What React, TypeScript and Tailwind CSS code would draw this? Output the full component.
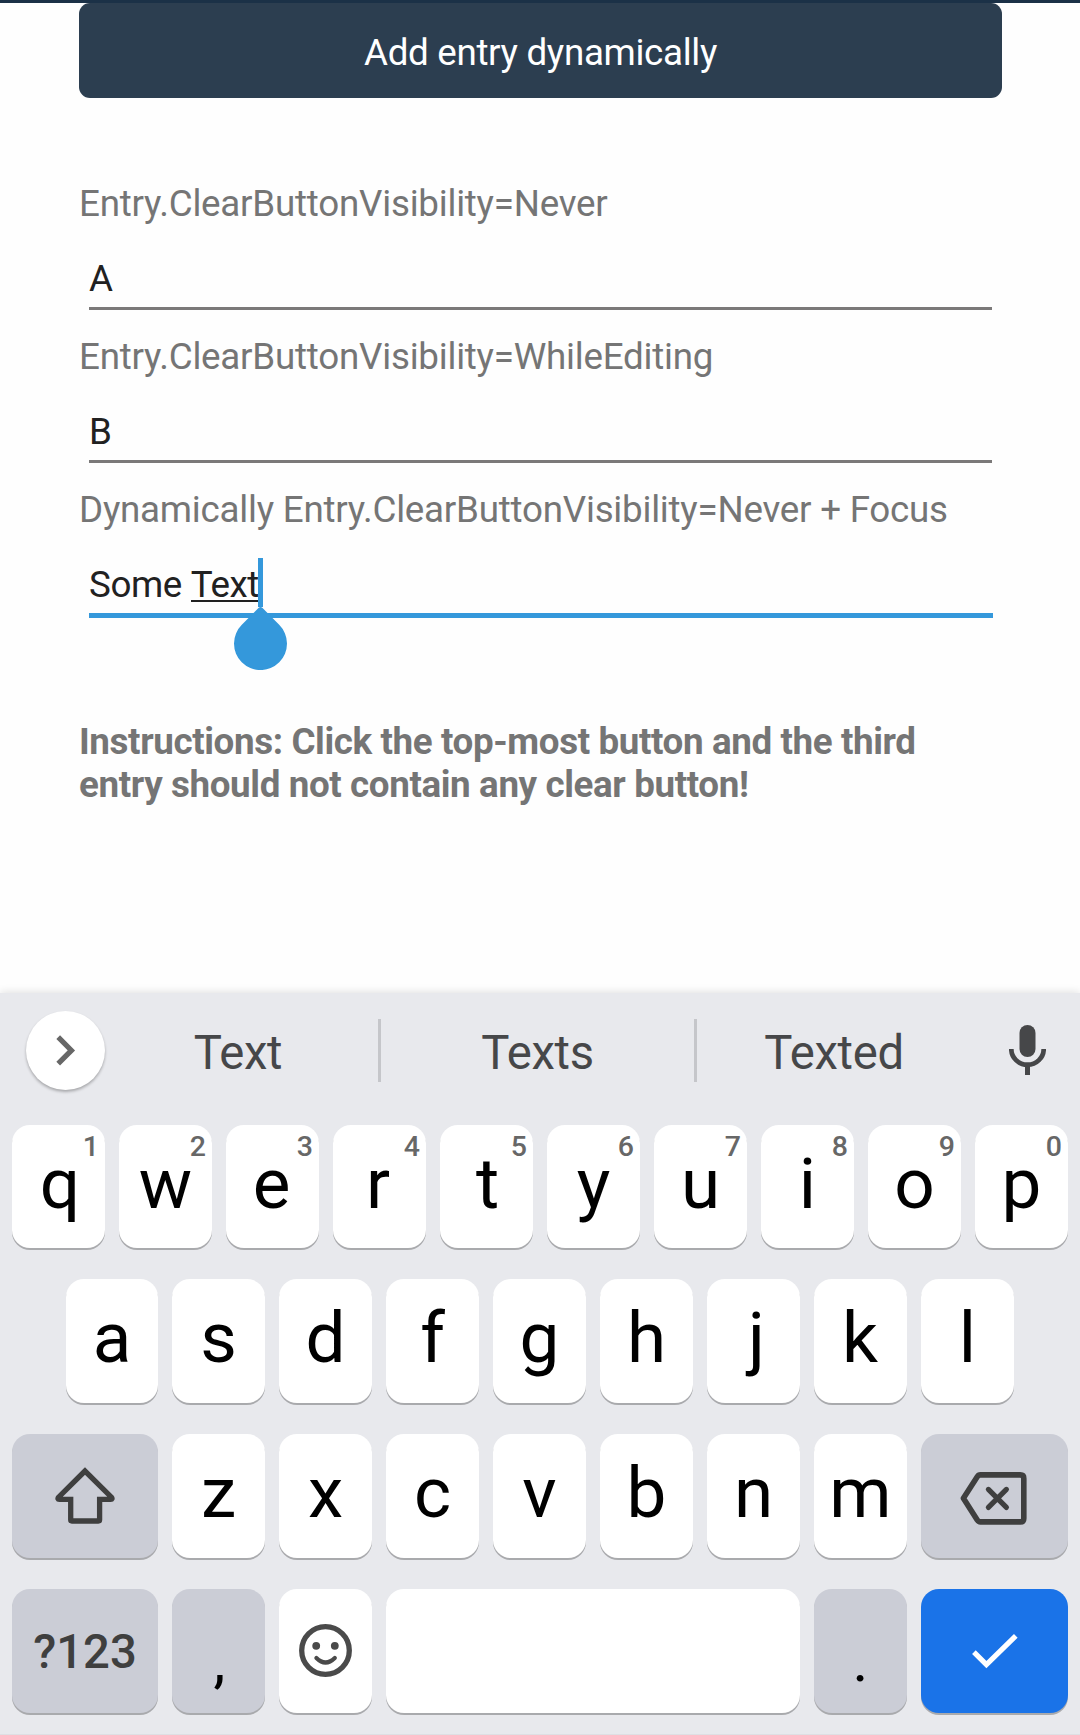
import type { ReactNode } from "react";

function Entry({ label, children, focused }: { label: string; children: ReactNode; focused?: boolean }) {
  return (
    <div className="h-[153px]">
      <div className="text-[#757575] tracking-[-0.235px] whitespace-nowrap">{label}</div>
      <div className="mt-8 mx-[10px]">
        <div className="h-[50px] text-[#212121] tracking-[-0.4px] whitespace-nowrap">{children}</div>
        {focused ? (
          <div className="h-[5px] -mr-px bg-[#3498db]" />
        ) : (
          <div className="h-[3px] bg-[#7b7979]" />
        )}
      </div>
    </div>
  );
}

function Key({
  children,
  hint,
  className = "w-[93px] h-[124px] bg-white",
}: {
  children?: ReactNode;
  hint?: string;
  className?: string;
}) {
  return (
    <div
      className={
        "relative shrink-0 rounded-[18px] flex justify-center shadow-[0_2px_0_#a9aaad] " + className
      }
    >
      {hint && (
        <span className="absolute right-[6px] top-0 text-[28.5px] leading-[43px] font-medium text-[#676767]">
          {hint}
        </span>
      )}
      {children}
    </div>
  );
}

const nudges: Record<string, string> = {
  q: "pl-[3px]",
  e: "pr-[2px]",
  r: "pr-[3px]",
  t: "pl-[2px]",
  j: "pl-[6px]",
  k: "pr-[1px]",
};

function Letter({ char, hint, className }: { char: string; hint?: string; className?: string }) {
  return (
    <Key hint={hint} className={className}>
      <span className={"text-[71px] leading-[118px] text-black " + (nudges[char] ?? "")}>{char}</span>
    </Key>
  );
}

function ShiftIcon() {
  return (
    <svg className="self-center -mt-[2px]" width="60" height="57" viewBox="0 0 60 57" fill="none" stroke="#3f3f3f" strokeWidth="5.3">
      <path d="M30 4 L3.6 30.2 Q2 32.3 4.4 32.4 H15.7 V52.8 Q15.7 54 16.9 54 H43.4 Q44.6 54 44.6 52.8 V32.4 H55.6 Q58 32.3 56.4 30.2 Z" />
    </svg>
  );
}

function BackspaceIcon() {
  return (
    <svg className="self-center mt-[4px] mr-[3px]" width="67" height="53" viewBox="0 0 67 53" fill="none" stroke="#3f3f3f">
      <path
        strokeWidth="5.6"
        strokeLinejoin="round"
        d="M3.4 26.3 L17.4 4.6 Q18.4 2.9 20.4 2.9 H60.3 Q63.8 2.9 63.8 6.4 V46.4 Q63.8 49.9 60.3 49.9 H20.4 Q18.4 49.9 17.4 48.2 Z"
      />
      <path strokeWidth="5.2" strokeLinecap="round" d="M28.4 17.4 L46.4 35.4 M46.4 17.4 L28.4 35.4" />
    </svg>
  );
}

function SmileIcon() {
  return (
    <svg className="self-center -mt-px" width="53" height="53" viewBox="0 0 53 53" fill="none" stroke="#4a4a4a">
      <circle cx="26.5" cy="26.5" r="23.8" strokeWidth="5.3" />
      <circle cx="17.2" cy="21.8" r="3.9" fill="#4a4a4a" stroke="none" />
      <circle cx="35.8" cy="21.8" r="3.9" fill="#4a4a4a" stroke="none" />
      <path strokeWidth="4.2" strokeLinecap="round" d="M17.4 34 Q26.5 43 35.8 34" />
    </svg>
  );
}

const topRow = "qwertyuiop".split("");
const homeRow = "asdfghjkl".split("");
const bottomRow = "zxcvbnm".split("");

export default function App() {
  return (
    <div className="w-[1080px] h-[1735px] overflow-hidden bg-[#fefefe] flex flex-col font-['Roboto',sans-serif]">
      <div className="h-[3px] shrink-0 bg-[#1b3147]" />
      <main className="h-[990px] shrink-0 pl-[79px] pr-[78px] text-[36.75px] leading-[43px]">
        <div className="h-[95px] rounded-[11px] bg-[#2c3e50] text-white text-center pt-[28px] tracking-[-0.32px]">
          Add entry dynamically
        </div>
        <div className="mt-[84px]">
          <Entry label="Entry.ClearButtonVisibility=Never">A</Entry>
          <Entry label="Entry.ClearButtonVisibility=WhileEditing">B</Entry>
          <Entry label="Dynamically Entry.ClearButtonVisibility=Never + Focus" focused>
            Some{" "}
            <span className="relative inline-block">
              Text
              <span className="absolute left-0 right-0 top-[37px] h-[1.5px] bg-[#212121]" />
              <span className="absolute -right-[4px] -top-[5px] w-[5px] h-[49px] bg-[#3498db]" />
              <svg className="absolute -right-[28px] top-[44px]" width="53" height="63" viewBox="0 0 53 63">
                <path
                  fill="#3498db"
                  d="M26.5 0 Q27.5 0 28.3 .8 L45.2 17.8 A26.5 26.5 0 1 1 7.8 17.8 L24.7 .8 Q25.5 0 26.5 0 Z"
                />
              </svg>
            </span>
          </Entry>
        </div>
        <p className="mt-[79px] font-bold text-[#757575] whitespace-nowrap tracking-[-0.38px]">
          Instructions: Click the top-most button and the third
          <br />
          entry should not contain any clear button!
        </p>
      </main>
      <section className="relative h-[742px] shrink-0 bg-[#e8e9ed] border-b border-[#dedfe3] shadow-[0_-1px_8px_rgba(0,0,0,0.12)]">
        <div className="h-[132px] flex text-[47.25px] leading-[121px] tracking-[-0.35px] text-[#464749]">
          <div className="w-[98px] shrink-0 pl-[26px] pt-[18px]">
            <div className="w-[79px] h-[79px] rounded-full bg-white shadow-[0_2px_3px_rgba(0,0,0,0.28)] flex items-center justify-center">
              <svg className="-mt-px" width="20" height="31" viewBox="0 0 20 31" fill="none" stroke="#676767" strokeWidth="5.2">
                <path d="M2.2 2.2 L15.4 15.4 L2.2 28.6" />
              </svg>
            </div>
          </div>
          <div className="w-[280px] text-center">Text</div>
          <div className="w-[3px] h-[63px] mt-[26px] bg-[#c5c6ca]" />
          <div className="w-[313px] text-center">Texts</div>
          <div className="w-[3px] h-[63px] mt-[26px] bg-[#c5c6ca]" />
          <div className="w-[274px] text-center">Texted</div>
          <svg className="ml-[38px] mt-8" width="37" height="50" viewBox="0 0 37 50">
            <rect x="10.5" y="0" width="16" height="32" rx="8" fill="#464749" />
            <path d="M2.3 24 A16.2 15.7 0 0 0 34.7 24" fill="none" stroke="#464749" strokeWidth="4.7" />
            <rect x="16" y="40" width="5" height="10" fill="#464749" />
          </svg>
        </div>
        <div className="px-3 flex flex-col gap-[31px]">
          <div className="flex gap-[14px]">
            {topRow.map((c, i) => (
              <Letter key={c} char={c} hint={String((i + 1) % 10)} className="w-[93px] h-[123px] bg-white" />
            ))}
          </div>
          <div className="pl-[54px] flex gap-[14px]">
            {homeRow.map((c, i) => (
              <Letter
                key={c}
                char={c}
                className={i === 0 ? "w-[92px] h-[124px] bg-white" : "w-[93px] h-[124px] bg-white"}
              />
            ))}
          </div>
          <div className="flex gap-[14px]">
            <Key className="w-[146px] h-[124px] bg-[#cbcdd6]">
              <ShiftIcon />
            </Key>
            {bottomRow.map((c) => (
              <Letter key={c} char={c} />
            ))}
            <Key className="w-[147px] h-[124px] bg-[#cbcdd6]">
              <BackspaceIcon />
            </Key>
          </div>
          <div className="flex gap-[14px]">
            <Key className="w-[146px] h-[124px] bg-[#cbcdd6]">
              <span className="text-[47.25px] leading-[126px] font-medium text-[#3f3f3f]">?123</span>
            </Key>
            <Key className="w-[93px] h-[124px] bg-[#cbcdd6]">
              <span className="pl-[2px] text-[60px] leading-[143px] text-black">,</span>
            </Key>
            <Key>
              <SmileIcon />
            </Key>
            <Key className="w-[414px] h-[124px] bg-white" />
            <Key className="w-[93px] h-[124px] bg-[#cbcdd6]">
              <span className="text-[60px] leading-[143px] text-black">.</span>
            </Key>
            <Key className="w-[147px] h-[124px] bg-[#1a73e8]">
              <svg className="self-center" width="46" height="35" viewBox="0 0 46 35" fill="none" stroke="#fff" strokeWidth="5.2">
                <path d="M1.9 18.2 L14.4 30.6 L43.8 1.9" />
              </svg>
            </Key>
          </div>
        </div>
      </section>
    </div>
  );
}
